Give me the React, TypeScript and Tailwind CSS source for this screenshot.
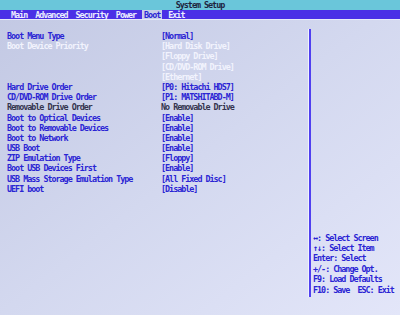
const tabs = ['Main', 'Advanced', 'Security', 'Power', 'Boot', 'Exit'];

type Row = { label: string; value: string; tone: 'blue' | 'white' | 'gray' };

const rows: Row[] = [
  { label: 'Boot Menu Type', value: '[Normal]', tone: 'blue' },
  { label: 'Boot Device Priority', value: '[Hard Disk Drive]', tone: 'white' },
  { label: '', value: '[Floppy Drive]', tone: 'white' },
  { label: '', value: '[CD/DVD-ROM Drive]', tone: 'white' },
  { label: '', value: '[Ethernet]', tone: 'white' },
  { label: 'Hard Drive Order', value: '[P0: Hitachi HDS7]', tone: 'blue' },
  { label: 'CD/DVD-ROM Drive Order', value: '[P1: MATSHITABD-M]', tone: 'blue' },
  { label: 'Removable Drive Order', value: 'No Removable Drive', tone: 'gray' },
  { label: 'Boot to Optical Devices', value: '[Enable]', tone: 'blue' },
  { label: 'Boot to Removable Devices', value: '[Enable]', tone: 'blue' },
  { label: 'Boot to Network', value: '[Enable]', tone: 'blue' },
  { label: 'USB Boot', value: '[Enable]', tone: 'blue' },
  { label: 'ZIP Emulation Type', value: '[Floppy]', tone: 'blue' },
  { label: 'Boot USB Devices First', value: '[Enable]', tone: 'blue' },
  { label: 'USB Mass Storage Emulation Type', value: '[All Fixed Disc]', tone: 'blue' },
  { label: 'UEFI boot', value: '[Disable]', tone: 'blue' },
];

const help = [
  '↔: Select Screen',
  '↑↓: Select Item',
  'Enter: Select',
  '+/-: Change Opt.',
  'F9: Load Defaults',
  'F10: Save  ESC: Exit',
];

const toneClass = {
  blue: 'text-[#2a24d4]',
  white: 'text-[#f2f3fd]',
  gray: 'text-[#34344e]',
};

export default function App() {
  return (
    <div
      className="w-[400px] h-[315px] overflow-hidden flex flex-col bg-linear-to-br from-[#c2c8e3] via-[#d3d8ef] to-[#e3e6f9] font-bold text-[8.4px] tracking-[-1px] whitespace-pre"
      style={{ fontFamily: '"DejaVu Sans Mono", "Liberation Mono", monospace' }}
    >
      {/* Title */}
      <div className="h-[10px] bg-[#6ac6da] text-[#1e2440] flex items-center justify-center leading-[10px]">
        System Setup
      </div>

      {/* Tabs */}
      <div className="h-[10px] bg-[#4a30e6] flex items-stretch pl-[9px] gap-[4px] leading-[10px] border-b border-[#e6e9f8]">
        {tabs.map((t) => (
          <div
            key={t}
            className={`px-[2px] ${t === 'Boot' ? 'bg-[#c9d0ea] text-[#2a24d4]' : 'text-[#eceeff]'}`}
          >
            {t}
          </div>
        ))}
      </div>

      {/* Body */}
      <div className="flex flex-1">
        <div className="w-[309px] pl-[7px] pt-[11px]">
          {rows.map((r, i) => (
            <div key={i} className={`flex h-[10.2px] leading-[10.2px] ${toneClass[r.tone]}`}>
              <div className="w-[154px]">{r.label}</div>
              <div>{r.value}</div>
            </div>
          ))}
        </div>
        <div className="mt-[9px] mb-[18px] border-l-[2px] border-[#5040f0] shadow-[-1px_0_0_#f0f2ff] flex flex-col justify-end pl-[2px] pb-[2px] text-[#2a24d4]">
          {help.map((h) => (
            <div key={h} className="h-[10.4px] leading-[10.4px]">
              {h}
            </div>
          ))}
        </div>
      </div>
    </div>
  );
}
